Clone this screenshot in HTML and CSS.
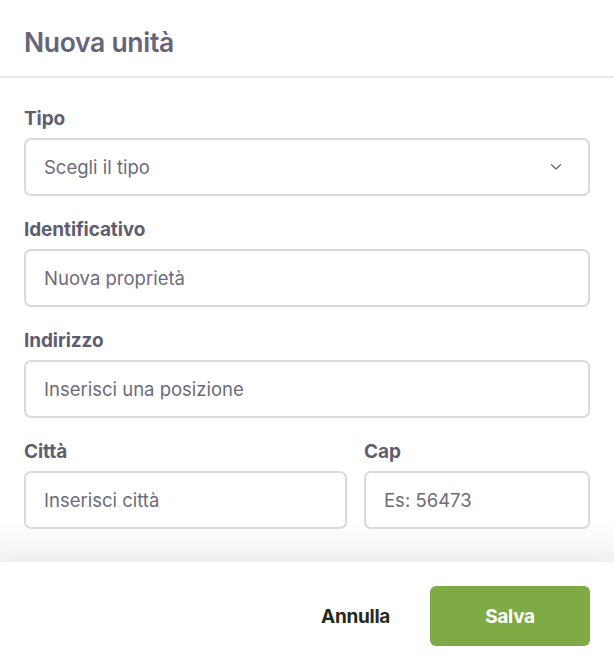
FILE: index.html
```html
<!DOCTYPE html>
<html lang="it">
<head>
    <meta charset="UTF-8">
    <meta name="viewport" content="width=device-width, initial-scale=1.0">
    <title>Nuova unità</title>
    <link rel="stylesheet" href="styles.css">
</head>
<body>
    <div class="modal">
        <div class="modal-header">
            <h1>Nuova unità</h1>
        </div>

        <form class="modal-body" id="unitaForm">
            <div class="form-group">
                <label for="tipo">Tipo</label>
                <div class="select-wrap">
                    <select id="tipo">
                        <option value="">Scegli il tipo</option>
                        <option value="appartamento">Appartamento</option>
                        <option value="villa">Villa</option>
                    </select>
                    <svg class="chevron" width="12" height="8" viewBox="0 0 12 8"><path d="M1.5 1.8 L6 6 L10.5 1.8" fill="none" stroke="#6b6a78" stroke-width="1.4" stroke-linecap="round" stroke-linejoin="round"/></svg>
                </div>
            </div>

            <div class="form-group">
                <label for="identificativo">Identificativo</label>
                <input type="text" id="identificativo" placeholder="Nuova proprietà">
            </div>

            <div class="form-group">
                <label for="indirizzo">Indirizzo</label>
                <input type="text" id="indirizzo" placeholder="Inserisci una posizione">
            </div>

            <div class="form-row">
                <div class="form-group citta">
                    <label for="citta">Città</label>
                    <input type="text" id="citta" placeholder="Inserisci città">
                </div>
                <div class="form-group cap">
                    <label for="cap">Cap</label>
                    <input type="text" id="cap" placeholder="Es: 56473">
                </div>
            </div>
        </form>

        <div class="modal-footer">
            <button type="button" class="btn-link">Annulla</button>
            <button type="submit" form="unitaForm" class="btn-primary">Salva</button>
        </div>
    </div>
</body>
</html>
```

FILE: styles.css
```css
body {
    font-family: 'Inter', 'Liberation Sans', sans-serif;
    background-color: #f4f4f5;
    margin: 0;
    color: #5d5b6c;
}
.modal {
    background: white;
    min-height: 672px;
    display: flex;
    flex-direction: column;
}
.modal-header {
    height: 76px;
    padding: 0 24px;
    display: flex;
    align-items: center;
    border-bottom: 2px solid #e7e7e9;
}
h1 {
    margin: 0;
    font-size: 26.5px;
    font-weight: 600;
    letter-spacing: -0.3px;
    color: #67647a;
    padding-top: 8px;
}
.modal-body {
    padding: 29px 24px 33px;
    display: flex;
    flex-direction: column;
    gap: 22px;
    background: linear-gradient(to bottom, white 0, white 440px, #f4f4f5 100%);
}
.form-row {
    display: flex;
    gap: 17px;
}
.citta {
    flex: 0 0 323px;
}
.cap {
    flex: 1;
}
label {
    display: block;
    font-size: 19px;
    line-height: 24px;
    font-weight: 700;
    letter-spacing: -0.1px;
    margin-bottom: 7px;
    color: #5f5d6f;
}
input, select {
    width: 100%;
    height: 58px;
    padding: 0 18px;
    border: 2px solid #d9d9de;
    border-radius: 7px;
    box-sizing: border-box;
    background: white;
    font-family: inherit;
    font-size: 18.5px;
    color: #6d6b79;
    outline: none;
}
input::placeholder {
    color: #6d6b79;
}
select {
    appearance: none;
    -webkit-appearance: none;
}
.select-wrap {
    position: relative;
}
.chevron {
    position: absolute;
    right: 28px;
    top: 25px;
}
.modal-footer {
    flex: 1;
    background: white;
    border-radius: 0 12px 0 0;
    box-shadow: 0 -8px 20px rgba(0, 0, 0, 0.03);
    padding: 24px 24px 26px;
    display: flex;
    justify-content: flex-end;
    align-items: flex-start;
    gap: 20px;
}
button {
    font-family: inherit;
    font-size: 19px;
    font-weight: 700;
    letter-spacing: -0.3px;
    border: none;
    cursor: pointer;
    height: 60px;
}
.btn-link {
    background: none;
    color: #1f2c1b;
    padding: 0 20px;
}
.btn-primary {
    background-color: #7eab45;
    color: white;
    width: 160px;
    border-radius: 6px;
}
.btn-primary:hover {
    background-color: #6e9a38;
}
```
